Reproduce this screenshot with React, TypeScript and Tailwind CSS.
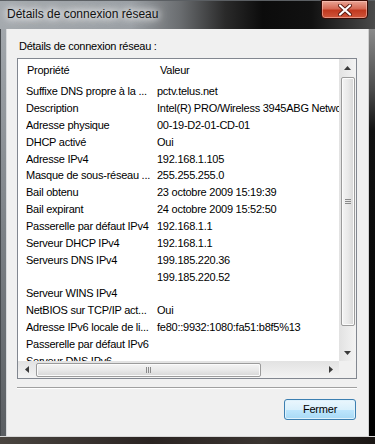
import React from 'react';

const rows: [string, string][] = [
  ['Suffixe DNS propre à la ...', 'pctv.telus.net'],
  ['Description', 'Intel(R) PRO/Wireless 3945ABG Network Connection'],
  ['Adresse physique', '00-19-D2-01-CD-01'],
  ['DHCP activé', 'Oui'],
  ['Adresse IPv4', '192.168.1.105'],
  ['Masque de sous-réseau ...', '255.255.255.0'],
  ['Bail obtenu', '23 octobre 2009 15:19:39'],
  ['Bail expirant', '24 octobre 2009 15:52:50'],
  ['Passerelle par défaut IPv4', '192.168.1.1'],
  ['Serveur DHCP IPv4', '192.168.1.1'],
  ['Serveurs DNS IPv4', '199.185.220.36'],
  ['', '199.185.220.52'],
  ['Serveur WINS IPv4', ''],
  ['NetBIOS sur TCP/IP act...', 'Oui'],
  ['Adresse IPv6 locale de li...', 'fe80::9932:1080:fa51:b8f5%13'],
  ['Passerelle par défaut IPv6', ''],
  ['Serveur DNS IPv6', ''],
];

const Arrow = ({ dir }: { dir: 'up' | 'down' | 'left' | 'right' }) => {
  const d = {
    up: 'M0 4 L3.5 0 L7 4 Z',
    down: 'M0 0 L3.5 4 L7 0 Z',
    left: 'M4 0 L0 3.5 L4 7 Z',
    right: 'M0 0 L4 3.5 L0 7 Z',
  }[dir];
  const vert = dir === 'up' || dir === 'down';
  return (
    <svg width={vert ? 7 : 4} height={vert ? 4 : 7} viewBox={vert ? '0 0 7 4' : '0 0 4 7'}>
      <path d={d} fill="#3a3a3a" />
    </svg>
  );
};

const App: React.FC = () => {
  return (
    <div
      className="w-[375px] h-[444px] flex flex-col overflow-hidden bg-[#2e2826] text-black"
      style={{ fontFamily: '"Liberation Sans", Arial, sans-serif' }}
    >
      {/* title bar */}
      <div className="h-[29px] shrink-0 flex items-start justify-between bg-[linear-gradient(90deg,#a4a9ae_0%,#9a9fa4_35%,#6a6d70_48%,#2a2a2a_60%,#0c0c0c_70%,#111_83%,#4a4a4a_100%)] border-t border-[#5b5f63]">
        <span className="mt-[5px] ml-[7px] text-[12px] leading-[16px] text-[#111] [text-shadow:0_0_6px_#fff,0_0_10px_#fff,0_0_14px_#fff]">
          Détails de connexion réseau
        </span>
        <div className="w-[47px] h-[19px] mr-[7px] -mt-px rounded-b-[4px] border border-[#3a0c05] bg-[linear-gradient(180deg,#e9a595_0%,#d66a55_45%,#c1391f_55%,#d0563b_100%)] shadow-[inset_0_0_0_1px_rgba(255,210,200,0.5)] flex items-center justify-center">
          <svg width="14" height="12" viewBox="0 0 14 12">
            <path d="M2 1.5 L12 10.5 M12 1.5 L2 10.5" stroke="#5a1a10" strokeWidth="4" strokeLinecap="round" />
            <path d="M2 1.5 L12 10.5 M12 1.5 L2 10.5" stroke="#fff" strokeWidth="2.2" strokeLinecap="round" />
          </svg>
        </div>
      </div>

      {/* middle */}
      <div className="flex-1 flex min-h-0">
        <div className="w-[7px] shrink-0 bg-[linear-gradient(180deg,#a2a7ac_0%,#7c8186_50%,#5a5e62_100%)] border-l border-[#45494d] border-r border-r-[#d8dadc]" />

        {/* client */}
        <div className="w-[361px] shrink-0 bg-[#f0f0f0] flex flex-col pl-[10px] pt-[10px]">
          <div className="ml-[2px] h-[14px] text-[11px] leading-[14px] tracking-[-0.25px]">Détails de connexion réseau :</div>

          {/* list box */}
          <div className="mt-[5px] w-[340px] h-[321px] border border-[#828790] bg-white grid grid-cols-[321px_17px] grid-rows-[302px_17px]">
            <div className="overflow-hidden text-[11px] tracking-[-0.25px]">
              <div className="h-[24px] flex items-center pl-[9px] border-b border-white">
                <span className="w-[133px] shrink-0">Propriété</span>
                <span>Valeur</span>
              </div>
              {rows.map(([k, v], i) => (
                <div key={i} className="h-[16.87px] flex items-center pl-[8px] whitespace-nowrap">
                  <span className="w-[131px] shrink-0 overflow-hidden">{k}</span>
                  <span>{v}</span>
                </div>
              ))}
            </div>

            {/* vertical scrollbar */}
            <div className="flex flex-col bg-[linear-gradient(90deg,#e2e2e2,#f3f3f3)]">
              <div className="h-[17px] flex items-center justify-center">
                <Arrow dir="up" />
              </div>
              <div className="flex-1 pt-[1px] pl-[2px] pr-[1px]">
                <div className="h-[249px] rounded-[2px] border border-[#9b9b9b] bg-[linear-gradient(90deg,#f4f4f4_0%,#e9e9e9_50%,#d6d6d6_100%)] shadow-[inset_0_0_0_1px_#fbfbfb] flex flex-col items-center justify-center gap-[1px]">
                  <div className="w-[6px] h-px bg-[#8a8a8a]" />
                  <div className="w-[6px] h-px bg-[#8a8a8a]" />
                  <div className="w-[6px] h-px bg-[#8a8a8a]" />
                </div>
              </div>
              <div className="h-[17px] flex items-center justify-center">
                <Arrow dir="down" />
              </div>
            </div>

            {/* horizontal scrollbar */}
            <div className="flex bg-[linear-gradient(180deg,#e2e2e2,#f3f3f3)]">
              <div className="w-[17px] flex items-center justify-center">
                <Arrow dir="left" />
              </div>
              <div className="flex-1 pt-[2px] pb-[1px] pl-px">
                <div className="w-[225px] h-full rounded-[2px] border border-[#9b9b9b] bg-[linear-gradient(180deg,#f4f4f4_0%,#e9e9e9_50%,#d6d6d6_100%)] shadow-[inset_0_0_0_1px_#fbfbfb] flex items-center justify-center gap-[1px]">
                  <div className="w-px h-[6px] bg-[#8a8a8a]" />
                  <div className="w-px h-[6px] bg-[#8a8a8a]" />
                  <div className="w-px h-[6px] bg-[#8a8a8a]" />
                </div>
              </div>
              <div className="w-[17px] flex items-center justify-center">
                <Arrow dir="right" />
              </div>
            </div>
            <div className="bg-[#f0f0f0]" />
          </div>

          {/* separator */}
          <div className="mt-[8px] w-[340px] border-t border-[#a0a0a0] border-b border-b-white" />

          {/* button */}
          <div className="mt-[10px] w-[340px] flex justify-end pr-px">
            <button className="w-[72px] h-[21px] rounded-[3px] border border-[#3c7fb1] bg-[linear-gradient(180deg,#eaf6fd_0%,#d9f0fc_50%,#bee6fd_51%,#a7d9f5_100%)] shadow-[inset_0_0_0_1px_#dff2fc] text-[11px] tracking-[-0.2px] leading-none flex items-center justify-center">
              Fermer
            </button>
          </div>
        </div>

        <div className="w-[7px] shrink-0 bg-[linear-gradient(180deg,#8a8a8a_0%,#4a4a4a_15%,#111_25%,#000_100%)] border-l border-[#cfcfcf]" />
      </div>

      {/* bottom frame */}
      <div className="h-[8px] shrink-0 border-t border-[#d8d8d8] bg-[linear-gradient(90deg,#4a4540_0%,#2b2422_40%,#3a3430_70%,#1a1614_100%)]" />
    </div>
  );
};

export default App;
